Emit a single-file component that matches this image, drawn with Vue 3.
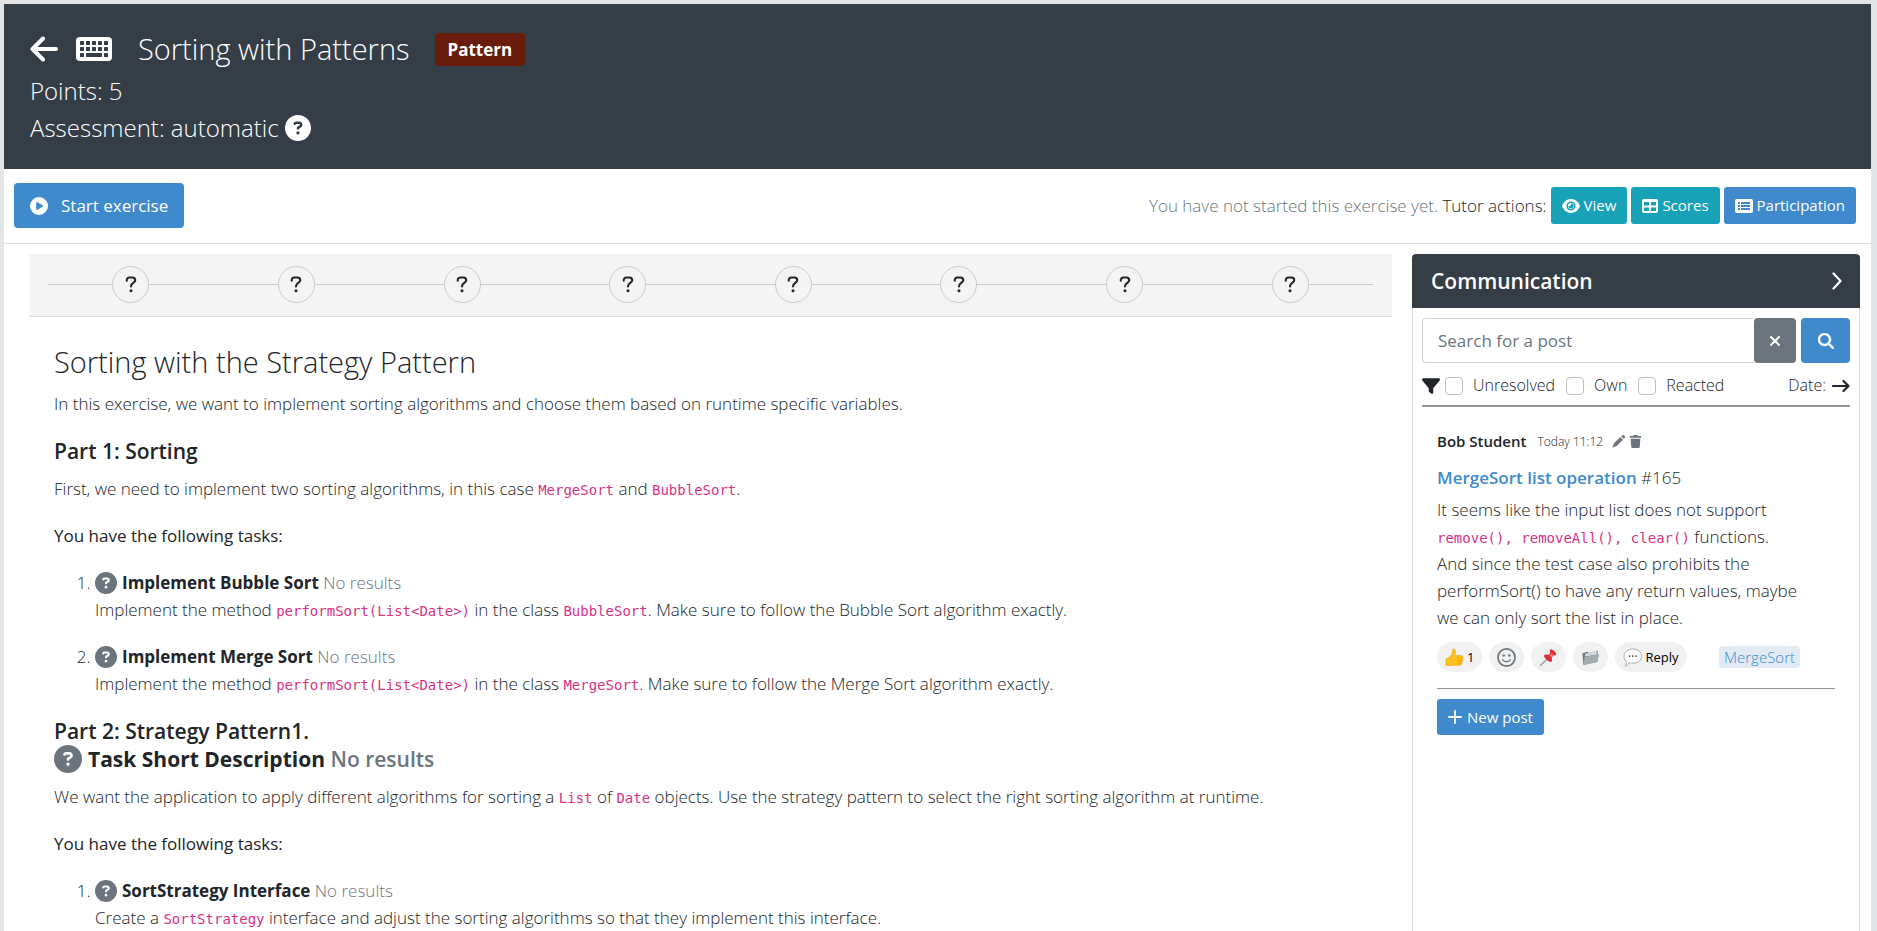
<script setup>
import { ref } from 'vue'

const steps = 8
const search = ref('')
const filters = ref([
  { id: 'unresolved', label: 'Unresolved', on: false },
  { id: 'own', label: 'Own', on: false },
  { id: 'reacted', label: 'Reacted', on: false }
])
const questionPath =
  'M256 512A256 256 0 1 0 256 0a256 256 0 1 0 0 512zM169.8 165.3c7.9-22.3 29.1-37.3 52.8-37.3h58.3c34.9 0 63.1 28.3 63.1 63.1c0 22.6-12.1 43.5-31.7 54.8L280 264.4c-.2 13-10.9 23.6-24 23.6c-13.3 0-24-10.7-24-24V250.5c0-8.6 4.6-16.5 12.1-20.8l44.3-25.4c4.7-2.7 7.6-7.7 7.6-13.1c0-8.4-6.8-15.1-15.1-15.1H222.6c-3.4 0-6.4 2.1-7.5 5.3l-.4 1.2c-4.4 12.5-18.2 19-30.6 14.6s-19-18.2-14.6-30.6l.4-1.2zM224 352a32 32 0 1 1 64 0 32 32 0 1 1 -64 0z'
const sortTasks = [
  { title: 'Implement Bubble Sort', cls: 'BubbleSort', name: 'Bubble Sort' },
  { title: 'Implement Merge Sort', cls: 'MergeSort', name: 'Merge Sort' }
]
</script>

<template>
  <div class="page">
    <div class="sheet">
      <header class="top">
        <div class="title-row">
          <a href="#" class="back" aria-label="Back">
            <svg viewBox="0 0 28 26"><path d="M13 2.500L2.500 13L13 23.500M3 13H26" fill="none" stroke="currentColor" stroke-width="4" stroke-linecap="round" stroke-linejoin="round" /></svg>
          </a>
          <svg class="keyboard" viewBox="0 0 36 24">
            <rect width="36" height="24" rx="4" fill="#fff" />
            <g fill="#353d47">
              <template v-for="r in 2" :key="r">
                <rect v-for="c in 5" :key="c" :x="c * 6 - 2" :y="r * 6 - 2" width="4" height="4" rx="0.600" />
              </template>
              <rect x="4" y="16" width="4" height="4" rx="0.600" />
              <rect x="10" y="16" width="16" height="4" rx="0.600" />
              <rect x="28" y="16" width="4" height="4" rx="0.600" />
            </g>
          </svg>
          <h1>Sorting with Patterns</h1>
          <span class="badge">Pattern</span>
        </div>
        <div class="info">Points: 5</div>
        <div class="info">
          Assessment: automatic
          <svg class="help" viewBox="0 0 512 512"><path :d="questionPath" fill="currentColor" /></svg>
        </div>
      </header>

      <div class="actions">
        <button type="button" class="start">
          <svg viewBox="0 0 512 512"><path fill="currentColor" fill-rule="evenodd" d="M0 256a256 256 0 1 1 512 0A256 256 0 1 1 0 256zM188.300 147.100c-7.600 4.200-12.300 12.300-12.300 20.900V344c0 8.700 4.700 16.700 12.300 20.900s16.800 4.100 24.300-.5l144-88c7.100-4.400 11.500-12.100 11.500-20.500s-4.400-16.100-11.500-20.500l-144-88c-7.400-4.500-16.700-4.700-24.300-.5z" /></svg>
          Start exercise
        </button>
        <div class="tutor">
          <span><span class="muted">You have not started this exercise yet.</span> Tutor actions:</span>
          <button type="button" class="teal">
            <svg viewBox="0 0 18 16">
              <path fill="currentColor" d="M9 1C4.500 1 1.500 4.200.2 7.400a1.600 1.600 0 0 0 0 1.200C1.500 11.800 4.500 15 9 15s7.500-3.200 8.800-6.400a1.600 1.600 0 0 0 0-1.200C16.500 4.200 13.500 1 9 1z" />
              <circle cx="9" cy="8" r="3.800" fill="none" stroke="#17a2b8" stroke-width="1.500" />
              <path fill="#17a2b8" d="M9 5.500a2.500 2.500 0 0 1-2.600 2.600A2.600 2.600 0 1 0 9 5.400z" />
            </svg>
            View
          </button>
          <button type="button" class="teal">
            <svg class="grid" viewBox="0 0 16 16"><path fill="currentColor" fill-rule="evenodd" d="M2 1h12a2 2 0 0 1 2 2v10a2 2 0 0 1-2 2H2a2 2 0 0 1-2-2V3a2 2 0 0 1 2-2zM2 4v3.500h5V4zM9 4v3.500h5V4zM2 9.500V13h5V9.500zM9 9.500V13h5V9.500z" /></svg>
            Scores
          </button>
          <button type="button" class="blue">
            <svg viewBox="0 0 18 16">
              <rect y="1" width="18" height="14" rx="2" fill="currentColor" />
              <g fill="#3e8acc"><rect x="3" y="4" width="2" height="2" /><rect x="3" y="7" width="2" height="2" /><rect x="3" y="10" width="2" height="2" /><rect x="6" y="4" width="9" height="2" /><rect x="6" y="7" width="9" height="2" /><rect x="6" y="10" width="9" height="2" /></g>
            </svg>
            Participation
          </button>
        </div>
      </div>

      <div class="columns">
        <main>
          <div class="stepper">
            <div class="track">
              <button v-for="s in steps" :key="s" type="button" class="step" :aria-label="`Task ${s}`">
                <svg viewBox="0 0 12 18"><path d="M1.500 5V4.200A2.700 2.700 0 0 1 4.200 1.500H7.500A3 3 0 0 1 10.500 4.500C10.500 7.500 6 7.300 6 11" fill="none" stroke="currentColor" stroke-width="2.200" stroke-linecap="round" /><circle cx="6" cy="15.700" r="1.600" fill="currentColor" /></svg>
              </button>
            </div>
          </div>

          <article>
            <h2>Sorting with the Strategy Pattern</h2>
            <p>In this exercise, we want to implement sorting algorithms and choose them based on runtime specific variables.</p>
            <h3>Part 1: Sorting</h3>
            <p>First, we need to implement two sorting algorithms, in this case <code>MergeSort</code> and <code>BubbleSort</code>.</p>
            <h4>You have the following tasks:</h4>
            <ol>
              <li v-for="t in sortTasks" :key="t.cls">
                <svg class="q" viewBox="0 0 512 512"><path :d="questionPath" fill="currentColor" /></svg>
                <strong>{{ t.title }}</strong> <span class="muted">No results</span><br>
                Implement the method <code>performSort(List&lt;Date&gt;)</code> in the class <code>{{ t.cls }}</code>. Make sure to follow the {{ t.name }} algorithm exactly.
              </li>
            </ol>
            <h3>
              Part 2: Strategy Pattern1.<br>
              <svg class="q big" viewBox="0 0 512 512"><path :d="questionPath" fill="currentColor" /></svg>
              <strong>Task Short Description</strong> <span class="muted">No results</span>
            </h3>
            <p>We want the application to apply different algorithms for sorting a <code>List</code> of <code>Date</code> objects. Use the strategy pattern to select the right sorting algorithm at runtime.</p>
            <h4>You have the following tasks:</h4>
            <ol>
              <li>
                <svg class="q" viewBox="0 0 512 512"><path :d="questionPath" fill="currentColor" /></svg>
                <strong>SortStrategy Interface</strong> <span class="muted">No results</span><br>
                Create a <code>SortStrategy</code> interface and adjust the sorting algorithms so that they implement this interface.
              </li>
            </ol>
          </article>
        </main>

        <aside>
          <div class="side-head">
            <h2>Communication</h2>
            <button type="button" aria-label="Collapse">
              <svg viewBox="0 0 10 18"><path d="M1.500 1.500L8.500 9L1.500 16.500" fill="none" stroke="currentColor" stroke-width="2.200" stroke-linecap="round" stroke-linejoin="round" /></svg>
            </button>
          </div>
          <div class="side-body">
            <form class="search" @submit.prevent>
              <input v-model="search" type="text" placeholder="Search for a post" aria-label="Search for a post">
              <button type="button" class="clear" aria-label="Clear" @click="search = ''">
                <svg viewBox="0 0 12 12"><path d="M2 2L10 10M10 2L2 10" fill="none" stroke="currentColor" stroke-width="2" stroke-linecap="round" /></svg>
              </button>
              <button type="submit" class="go" aria-label="Search">
                <svg viewBox="0 0 512 512"><path fill="currentColor" stroke="currentColor" stroke-width="14" d="M416 208c0 45.900-14.900 88.300-40 122.700L502.600 457.400c12.500 12.500 12.500 32.800 0 45.300s-32.800 12.500-45.300 0L330.700 376c-34.400 25.200-76.800 40-122.700 40C93.100 416 0 322.900 0 208S93.100 0 208 0S416 93.100 416 208zM208 352a144 144 0 1 0 0-288 144 144 0 1 0 0 288z" /></svg>
              </button>
            </form>
            <div class="filters">
              <svg class="funnel" viewBox="0 0 512 512"><path fill="currentColor" d="M3.900 54.900C10.500 40.900 24.500 32 40 32H472c15.500 0 29.500 8.900 36.100 22.900s4.600 30.500-5.200 42.500L320 320.900V448c0 12.100-6.800 23.200-17.700 28.600s-23.800 4.300-33.500-3l-64-48c-8.100-6-12.800-15.500-12.800-25.600V320.900L9 97.300C-.7 85.400-2.800 68.800 3.900 54.900z" /></svg>
              <label v-for="f in filters" :key="f.id" :for="f.id">
                <input :id="f.id" v-model="f.on" type="checkbox">{{ f.label }}
              </label>
              <button type="button" class="sort">
                Date:
                <svg viewBox="0 0 18 14"><path d="M1 7H16.500M11.500 2L16.500 7L11.500 12" fill="none" stroke="currentColor" stroke-width="2.200" stroke-linecap="round" stroke-linejoin="round" /></svg>
              </button>
            </div>

            <section class="post">
              <div class="author">
                <strong>Bob Student</strong>
                <time>Today 11:12</time>
                <button type="button" aria-label="Edit"><svg viewBox="0 0 14 14"><path fill="currentColor" d="M9.900 1.200L11 .4a1.500 1.500 0 0 1 1.900.1l.7.700a1.500 1.500 0 0 1 0 2l-1 1.100zM9 2.100L11.800 5 5 11.800 .3 13.800 2.200 9z" /></svg></button>
                <button type="button" aria-label="Delete"><svg viewBox="0 0 12 14"><path fill="currentColor" d="M4 0h4l.6 1H12v2H0V1h3.400zM.8 4h10.400l-.6 8.700a1.400 1.400 0 0 1-1.400 1.300H2.800a1.400 1.400 0 0 1-1.400-1.300z" /></svg></button>
              </div>
              <div class="post-title"><a href="#">MergeSort list operation</a> #165</div>
              <p class="text">It seems like the input list does not support <code>remove(), removeAll(), clear()</code> functions.<br>And since the test case also prohibits the performSort() to have any return values, maybe we can only sort the list in place.</p>
              <div class="reactions">
                <button type="button">
                  <svg class="emoji" viewBox="0 0 20 20">
                    <path fill="#fcc21b" stroke="#e59600" stroke-width="0.500" d="M1 11.500C4 10.500 6.500 8.500 7.500 5.500L8 2C8.200 .5 10.800 .6 11 3c.1 1.800-.5 3.700-.7 5h7.200c1.700 0 2 2.300.6 2.700 1.300.5 1 2.500-.4 2.700 1 .6.600 2.300-.7 2.500.7.800.2 2.300-1.300 2.300H9c-2.500 0-4 .8-8 .3z" />
                    <path fill="none" stroke="#e59600" stroke-width="0.700" stroke-linecap="round" d="M13 10.700h5M13 13.400h4.600M13 15.900h3.800" />
                  </svg>
                  <span>1</span>
                </button>
                <button type="button" aria-label="Add reaction">
                  <svg class="emoji" viewBox="0 0 20 20"><circle cx="10" cy="10" r="9" fill="none" stroke="#6c757d" stroke-width="1.800" /><circle cx="7" cy="8" r="1.300" fill="#6c757d" /><circle cx="13" cy="8" r="1.300" fill="#6c757d" /><path d="M6 12.500c2 2.600 6 2.600 8 0" fill="none" stroke="#6c757d" stroke-width="1.600" stroke-linecap="round" /></svg>
                </button>
                <button type="button" aria-label="Pin">
                  <svg class="emoji" viewBox="0 0 20 20"><path d="M8 12L1.500 18.500" stroke="#8fa3ad" stroke-width="1.500" stroke-linecap="round" /><path fill="#dc2f36" d="M12 1.500c1.500-1 7 3.500 6 5.500-.6 1-2 .9-2.800.5l-2 2.700c.9 1.800.7 3.800-.4 4.600C11 15.500 4.500 10 5.300 8c.6-1.300 2.800-1.500 4.400-.7L12 4.700c-.6-1-.8-2.400 0-3.200z" /><path fill="#f5777a" d="M13 5.500l2 1.600-2.600 2.600-1.600-1.300z" /></svg>
                </button>
                <button type="button" aria-label="Archive">
                  <svg class="emoji" viewBox="0 0 20 20"><path fill="#6f7a80" d="M1.500 5.500L7 4l1.300 1.200L17.500 2.500v12L2.500 18z" /><path fill="#d4d9db" d="M4.500 6L16.500 3v4L4 9z" /><path fill="#a4abae" d="M4 9.500L19.500 6.500 16.500 15 2.500 18z" /></svg>
                </button>
                <button type="button">
                  <svg class="emoji" viewBox="0 0 20 20"><path fill="#fff" stroke="#a9a9a9" stroke-width="1" d="M10.500 1c5 0 9 3.100 9 7.500S15.500 16 10.500 16c-1.300 0-2.500-.2-3.600-.6C5.800 17.200 4 18.600 2.300 19c.9-1.300 1.300-3.200 1-5C1.700 12.600 1 10.700 1 8.500 1 4.100 5.500 1 10.500 1z" /><g fill="#444"><circle cx="7" cy="8.500" r="0.900" /><circle cx="10.300" cy="8.500" r="0.900" /><circle cx="13.600" cy="8.500" r="0.900" /></g></svg>
                  <span>Reply</span>
                </button>
                <a href="#" class="tag">MergeSort</a>
              </div>
            </section>
            <div class="new-row">
              <button type="button" class="new">
                <svg viewBox="0 0 14 14"><path d="M7 1V13M1 7H13" fill="none" stroke="currentColor" stroke-width="1.800" stroke-linecap="round" /></svg>
                New post
              </button>
            </div>
          </div>
        </aside>
      </div>
    </div>
  </div>
</template>

<style>
body {
  margin: 0;
}
</style>

<style scoped>
* {
  box-sizing: border-box;
}
.page {
  height: 100vh;
  overflow: hidden;
  padding: 4px 6px 0 4px;
  background: #e3e4e5;
  color: #212529;
  font: 300 17px/27px "Open Sans", "Noto Sans", sans-serif;
}
.sheet {
  min-height: 100%;
  display: flex;
  flex-direction: column;
  background: #fff;
}
svg {
  flex: none;
}
h1, h2, h3, h4, p, ol {
  margin: 0;
}
button {
  border: 0;
  padding: 0;
  background: none;
  color: inherit;
  font: inherit;
  cursor: pointer;
}
a {
  color: #3e8acc;
  text-decoration: none;
}
code {
  color: #d63384;
  font: 400 14px/1 "DejaVu Sans Mono", "Liberation Mono", monospace;
}
.muted {
  color: #6c757d;
}

.top {
  padding: 26px 26px 23px;
  background: #353d47;
  color: #fff;
}
.title-row {
  display: flex;
  align-items: center;
  height: 38px;
  margin-bottom: 4px;
}
.back {
  color: #fff;
  height: 26px;
}
.back svg {
  display: block;
  width: 28px;
  height: 26px;
}
.keyboard {
  width: 36px;
  height: 24px;
  margin-left: 18px;
}
h1 {
  margin-left: 26px;
  font-size: 29px;
  font-weight: 300;
  line-height: 38px;
}
.badge {
  margin-left: 25px;
  padding: 0 13px;
  border-radius: 4px;
  background: #691b0c;
  font-size: 17px;
  font-weight: 700;
  line-height: 33px;
}
.info {
  display: flex;
  align-items: center;
  gap: 6px;
  font-size: 24px;
  line-height: 37px;
}
.help {
  width: 26px;
  height: 26px;
}

.actions {
  display: flex;
  align-items: center;
  justify-content: space-between;
  padding: 14px 15px 15px 10px;
  border-bottom: 1px solid #dee2e6;
}
.start {
  display: flex;
  align-items: center;
  gap: 13px;
  height: 45px;
  padding: 0 16px;
  border-radius: 4px;
  background: #3e8acc;
  color: #fff;
  font-weight: 400;
}
.start svg {
  width: 18px;
  height: 18px;
}
.tutor {
  display: flex;
  align-items: center;
  gap: 4px;
}
.tutor button {
  display: flex;
  align-items: center;
  gap: 4px;
  height: 37px;
  padding: 0 11px;
  border-radius: 3px;
  color: #fff;
  font-size: 15px;
  font-weight: 400;
}
.tutor svg {
  width: 18px;
  height: 16px;
}
.tutor .grid {
  width: 16px;
}
.teal {
  background: #17a2b8;
}
.blue {
  background: #3e8acc;
}

.columns {
  flex: 1;
  display: flex;
  gap: 20px;
  padding: 10px 11px 0 25px;
}
main {
  flex: 1;
  min-width: 0;
}
.stepper {
  padding: 12px 19px 13px;
  border-bottom: 1px solid #dcdcdc;
  background: #f4f4f4;
}
.track {
  display: flex;
  justify-content: space-around;
  background: linear-gradient(#ccc, #ccc) center / 100% 1px no-repeat;
}
.step {
  display: grid;
  place-items: center;
  width: 37px;
  height: 37px;
  border: 1px solid #ccc;
  border-radius: 50%;
  background: #f4f4f4;
}
.step svg {
  width: 12px;
  height: 17px;
}
article {
  padding: 27px 25px 0;
}
article h2 {
  margin-bottom: 10px;
  font-size: 29px;
  font-weight: 300;
  line-height: 36px;
}
article h3 {
  margin: 20px 0 10px;
  font-size: 21px;
  font-weight: 600;
  line-height: 28px;
}
article h4 {
  margin: 20px 0;
  font-size: 17px;
  font-weight: 400;
}
strong {
  font-weight: 700;
}
ol {
  padding-left: 41px;
}
li + li {
  margin-top: 20px;
}
.q {
  width: 22px;
  height: 22px;
  margin-right: 5px;
  color: #6c757d;
  vertical-align: -5px;
}
.q.big {
  width: 28px;
  height: 28px;
  margin-right: 6px;
  vertical-align: -6px;
}

aside {
  flex: 0 0 448px;
  display: flex;
  flex-direction: column;
}
.side-head {
  display: flex;
  align-items: center;
  justify-content: space-between;
  height: 54px;
  padding: 0 18px 0 19px;
  border-radius: 4px 4px 0 0;
  background: #353d47;
  color: #fff;
}
.side-head h2 {
  font-size: 21px;
  font-weight: 600;
}
.side-head svg {
  display: block;
  width: 10px;
  height: 18px;
}
.side-body {
  flex: 1;
  padding: 10px 9px 0;
  border: 1px solid #d8dadd;
  border-width: 0 1px;
}
.search {
  display: flex;
}
.search input {
  flex: 1;
  min-width: 0;
  height: 45px;
  padding: 0 15px;
  border: 1px solid #ced4da;
  border-right: 0;
  border-radius: 4px 0 0 4px;
  background: #fff;
  color: #212529;
  font: 400 17px "Open Sans", sans-serif;
}
.search input::placeholder {
  color: #6c757d;
  opacity: 1;
}
.search button {
  display: grid;
  place-items: center;
  border-radius: 4px;
  color: #fff;
}
.clear {
  width: 42px;
  background: #6c757d;
}
.clear svg {
  width: 12px;
  height: 12px;
}
.go {
  width: 49px;
  margin-left: 5px;
  background: #3e8acc;
}
.go svg {
  width: 16px;
  height: 16px;
}
.filters {
  display: flex;
  align-items: center;
  height: 44px;
  padding-top: 3px;
  border-bottom: 2px solid #909294;
  font-size: 16px;
}
.funnel {
  width: 18px;
  height: 18px;
  margin-right: 5px;
}
.filters label {
  display: flex;
  align-items: center;
  margin-right: 11px;
}
.filters input {
  appearance: none;
  width: 18px;
  height: 18px;
  margin: 0 10px 0 0;
  border: 1px solid #bfbfbf;
  border-radius: 4px;
  background: #fff;
}
.filters input:checked {
  background: #3e8acc;
}
.sort {
  display: flex;
  align-items: center;
  gap: 6px;
  margin-left: auto;
}
.sort svg {
  width: 18px;
  height: 14px;
}

.post {
  margin: 0 15px;
  padding: 21px 0 16px;
  border-bottom: 1px solid #909294;
}
.author {
  display: flex;
  align-items: center;
}
.author strong {
  margin-right: 11px;
  font-size: 15px;
  font-weight: 600;
}
.author time {
  margin-right: 9px;
  font-size: 12px;
}
.author button {
  margin-right: 4px;
  color: #6c757d;
}
.author svg {
  display: block;
  width: 13px;
  height: 13px;
}
.post-title {
  margin: 9px 0 5px;
}
.post-title a {
  font-weight: 600;
}
.text {
  padding-right: 25px;
}
.reactions {
  display: flex;
  gap: 7px;
  margin-top: 11px;
}
.reactions button {
  display: flex;
  align-items: center;
  gap: 3px;
  height: 30px;
  padding: 0 8px;
  border-radius: 15px;
  background: #f1f1f1;
  color: #000;
  font-size: 13px;
  font-weight: 400;
}
.emoji {
  width: 19px;
  height: 19px;
}
.tag {
  align-self: center;
  margin: 0 35px 0 auto;
  padding: 0 5px;
  border-radius: 4px;
  background: #e2ebf3;
  font-size: 15px;
  line-height: 22px;
}
.new-row {
  padding: 10px 15px;
}
.new {
  display: flex;
  align-items: center;
  gap: 5px;
  height: 36px;
  padding: 0 11px;
  border-radius: 3px;
  background: #3e8acc;
  color: #fff;
  font-size: 15px;
  font-weight: 400;
}
.new svg {
  width: 14px;
  height: 14px;
}
</style>
